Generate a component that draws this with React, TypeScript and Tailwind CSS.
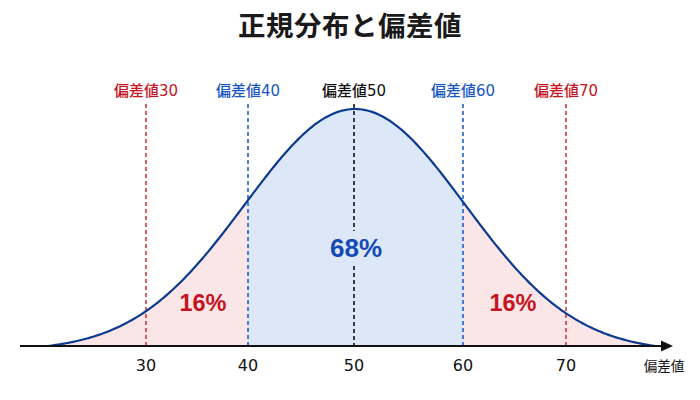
const CX = 355;
const BASE = 346;
const H = 237;
const SIG = 110;
const XL = 48;
const XR = 655;

const gauss = (x: number) => Math.exp(-(((x - CX) / SIG) ** 2) / 2);

// curve height, pulled down a little so both ends sit on the axis
const curveY = (x: number) => {
  const ge = x < CX ? gauss(XL) : gauss(XR);
  return BASE - (H * (gauss(x) - ge)) / (1 - ge);
};

const pts = (a: number, b: number) => {
  const out: string[] = [];
  for (let x = a; x < b; x += 2) out.push(`${x},${curveY(x).toFixed(2)}`);
  out.push(`${b},${curveY(b).toFixed(2)}`);
  return out;
};

const curvePath = "M" + pts(XL, XR).join(" L");
const area = (a: number, b: number) => `M${a},${BASE} L` + pts(a, b).join(" L") + ` L${b},${BASE} Z`;

const RED = "#c5141f";
const BLUE = "#1a56c2";

const lines = [
  { x: 146, label: "偏差値30", tick: "30", color: RED, stroke: "#d23a3f" },
  { x: 248, label: "偏差値40", tick: "40", color: BLUE, stroke: "#1d5fd6" },
  { x: 354, label: "偏差値50", tick: "50", color: "#111111", stroke: "#111111" },
  { x: 463, label: "偏差値60", tick: "60", color: BLUE, stroke: "#1d5fd6" },
  { x: 566, label: "偏差値70", tick: "70", color: RED, stroke: "#d23a3f" },
];

export default function App() {
  return (
    <div className="w-[700px] h-[400px] bg-white flex flex-col">
      <h1 className="h-[50px] flex items-center justify-center text-[27.5px] font-bold text-[#1a1a1a] font-['Noto_Sans_CJK_JP',sans-serif] tracking-[0.5px]">
        正規分布と偏差値
      </h1>
      <svg
        width="700"
        height="350"
        viewBox="0 50 700 350"
        className="font-['DejaVu_Sans','Noto_Sans_CJK_JP',sans-serif]"
      >
        <path d={area(XL, 248)} fill="#fbe6e7" />
        <path d={area(463, XR)} fill="#fbe6e7" />
        <path d={area(248, 463)} fill="#dce8f8" />

        {lines.map((l) =>
          l.x === 354 ? (
            <g key={l.x}>
              <line x1={l.x} y1={104} x2={l.x} y2={231} stroke={l.stroke} strokeWidth={1.6} strokeDasharray="4 3" />
              <line x1={l.x} y1={266} x2={l.x} y2={346} stroke={l.stroke} strokeWidth={1.6} strokeDasharray="4 3" />
            </g>
          ) : (
            <line key={l.x} x1={l.x} y1={104} x2={l.x} y2={346} stroke={l.stroke} strokeWidth={1.6} strokeDasharray="4 3" />
          )
        )}

        <path d={curvePath} fill="none" stroke="#0b3a8e" strokeWidth={2.2} />

        <line x1={20} y1={346} x2={664} y2={346} stroke="#111" strokeWidth={2} />
        <polygon points="661,340.5 673,346 661,351.5" fill="#111" />

        {lines.map((l) => (
          <text key={"l" + l.x} x={l.x} y={96} textAnchor="middle" fontSize={15} fontWeight={500} fill={l.color}>
            {l.label}
          </text>
        ))}
        {lines.map((l) => (
          <text key={"t" + l.x} x={l.x} y={371} textAnchor="middle" fontSize={16} fill="#111">
            {l.tick}
          </text>
        ))}
        <text x={664} y={371} textAnchor="middle" fontSize={13.5} fill="#111">
          偏差値
        </text>

        <g className="font-['Liberation_Sans','Noto_Sans_CJK_JP',sans-serif]">
          <text x={356} y={257} textAnchor="middle" fontSize={26} fontWeight={700} fill="#1549b8">
            68%
          </text>
          <text x={203} y={311} textAnchor="middle" fontSize={23.5} fontWeight={700} fill={RED}>
            16%
          </text>
          <text x={513} y={311} textAnchor="middle" fontSize={23.5} fontWeight={700} fill={RED}>
            16%
          </text>
        </g>
      </svg>
    </div>
  );
}
